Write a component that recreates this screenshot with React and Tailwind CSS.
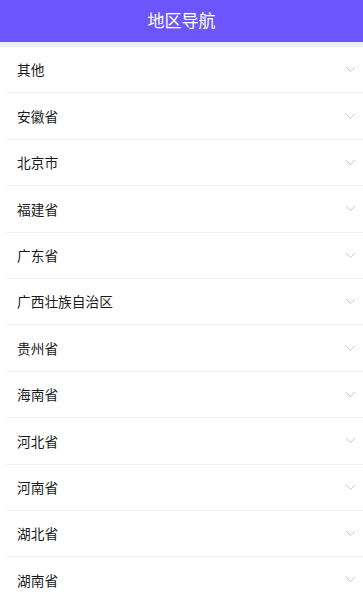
import React from "react";

const items = ["其他","安徽省","北京市","福建省","广东省","广西壮族自治区","贵州省","海南省","河北省","河南省","湖北省","湖南省"];

function Chevron() {
  return (
    <svg width="11" height="7" viewBox="0 0 11 7" fill="none" className="shrink-0">
      <path d="M0.8 0.8 L5.5 5.6 L10.2 0.8" stroke="#c9c9c9" strokeWidth="1" />
    </svg>
  );
}

export default function App() {
  return (
    <div className="w-[363px] h-[600px] overflow-hidden bg-white" style={{ fontFamily: '"Noto Sans CJK SC", "Noto Sans", sans-serif' }}>
      <div className="h-[42px] bg-[#6c56fb] flex items-center justify-center text-white text-[17px] pb-[3px]">地区导航</div>
      <div className="h-[5px] bg-[#f0eff5]"></div>
      <div className="pl-[6px]">
        {items.map((t, i) => (
          <div key={i} className="h-[46.4px] flex items-center justify-between border-b border-[#f3f3f3] pl-[11px] pr-[7px]">
            <span className="text-[13.7px] text-[#1a1a1a]">{t}</span>
            <Chevron />
          </div>
        ))}
      </div>
    </div>
  );
}
